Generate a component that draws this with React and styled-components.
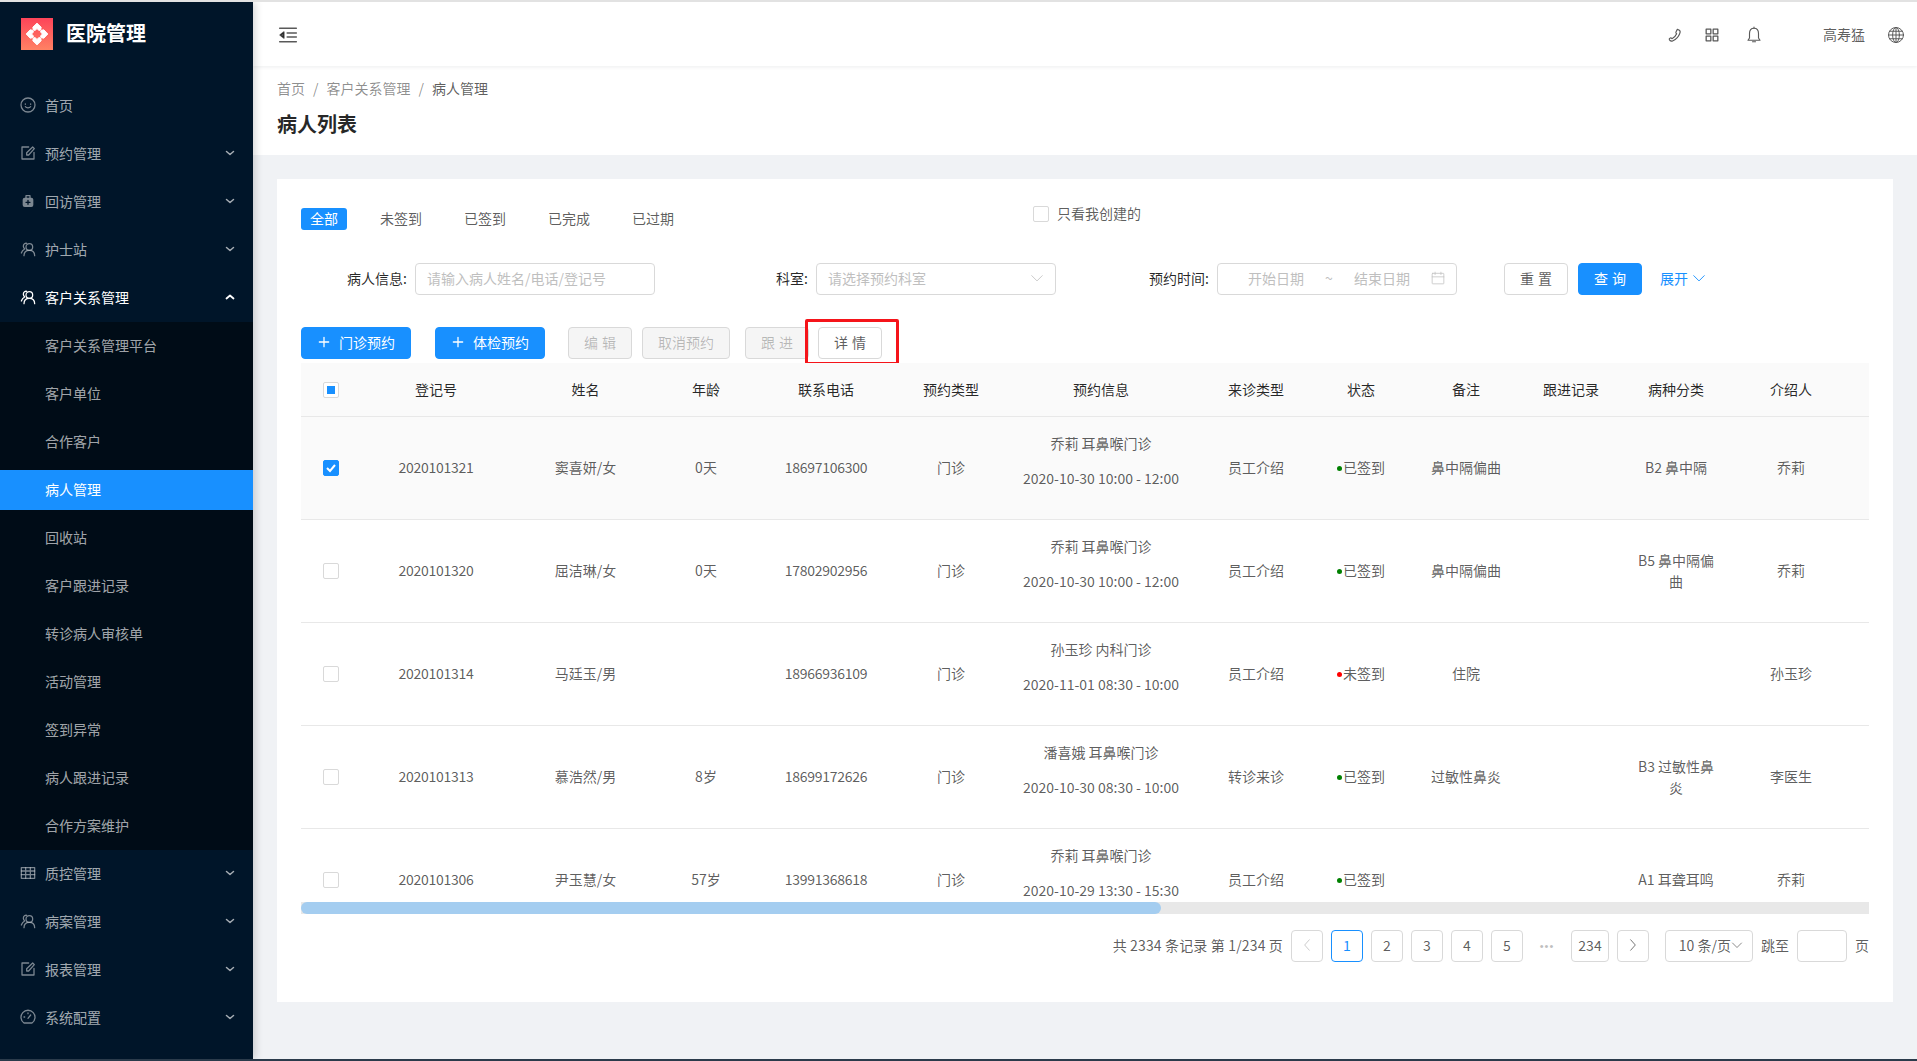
import React from 'react';
import styled, { createGlobalStyle } from 'styled-components';

const Global = createGlobalStyle`
  html, body { margin: 0; padding: 0; height: 100%; background: #f0f2f5; }
  #root { height: 100%; }
  * { box-sizing: border-box; }
  body { font-family: "Noto Sans CJK SC", "Liberation Sans", sans-serif; font-size: 14px; color: rgba(0,0,0,.65); overflow: hidden; }
  p { margin: 0; }
`;

const Page = styled.div`
  width: 1917px; height: 1061px; display: flex; flex-direction: column; overflow: hidden;
  background: #f0f2f5; border-top: 2px solid #e2e2e2; border-bottom: 2px solid #2b3b4b;
`;
const Shell = styled.div`flex: 1; min-height: 0; display: flex;`;
const Sidebar = styled.aside`
  width: 253px; flex: none; background: #001529; color: rgba(255,255,255,.65);
  box-shadow: 2px 0 8px rgba(29,35,41,.2); position: relative; z-index: 2; display: flex; flex-direction: column;
`;
const Brand = styled.div`height: 58px; padding: 16px 0 0 21px; display: flex; align-items: flex-start; gap: 13px; margin-bottom: 22px;`;
const BrandName = styled.div`color: #fff; font-size: 20px; font-weight: 700; line-height: 30px;`;
const MenuItem = styled.div`
  height: 48px; flex: none; display: flex; align-items: center; padding: 0 17px 2px 21px;
  color: ${p => p.$open ? '#fff' : 'rgba(255,255,255,.65)'};
  svg.main { width: 16px; height: 16px; margin-right: 9px; flex: none; opacity: ${p => p.$open ? 1 : .75}; margin-left: -1px; }
  span { flex: 1; }
`;
const SubMenu = styled.div`background: #000c17; display: flex; flex-direction: column;`;
const SubItem = styled.div`
  height: 40px; margin-bottom: 8px; display: flex; align-items: center; padding: 0 0 2px 45px;
  background: ${p => p.$active ? '#1890ff' : 'transparent'};
  color: ${p => p.$active ? '#fff' : 'rgba(255,255,255,.65)'};
  &:last-child { margin-bottom: 4px; }
  &:first-child { margin-top: 4px; }
`;

const Main = styled.main`flex: 1; min-width: 0; display: flex; flex-direction: column;`;
const Header = styled.header`
  height: 64px; flex: none; background: #fff; display: flex; align-items: center; padding: 2px 12px 0 25px;
  box-shadow: 0 1px 4px rgba(0,21,41,.08); position: relative; z-index: 1;
`;
const HeaderIcons = styled.div`margin-left: auto; display: flex; align-items: center; color: #595959;`;
const HeaderIcon = styled.span`display: flex; margin-left: ${p => p.$ml}px;`;
const UserName = styled.span`margin-left: 60px; font-size: 14px; line-height: 20px; padding-bottom: 3px; color: rgba(0,0,0,.65);`;
const PageHead = styled.div`background: #fff; height: 89px; padding: 11px 24px 0 24px; flex: none;`;
const Crumbs = styled.div`display: flex; gap: 8px; line-height: 22px; color: rgba(0,0,0,.45); span:last-child { color: rgba(0,0,0,.65); }`;
const Title = styled.h1`margin: 11px 0 0; font-size: 20px; font-weight: 700; line-height: 28px; color: rgba(0,0,0,.85);`;

const Card = styled.section`
  margin: 24px 24px 0 24px; height: 823px; background: #fff; padding: 29px 24px 0 24px; display: flex; flex-direction: column;
`;
const TabRow = styled.div`display: flex; align-items: flex-start; height: 22px;`;
const Tab = styled.div`
  height: 22px; line-height: 20px; border-radius: 3px; text-align: center; width: ${p => p.$w}px; margin-right: ${p => p.$mr}px;
  background: ${p => p.$active ? '#1890ff' : 'transparent'}; color: ${p => p.$active ? '#fff' : 'rgba(0,0,0,.65)'};
`;
const OwnCheck = styled.label`position: relative; display: flex; align-items: center; gap: 8px; margin-left: 359px; margin-top: -2px; height: 16px; span:last-child { margin-top: -2px; }`;
const Box = styled.span`
  width: 16px; height: 16px; flex: none; border-radius: 2px; border: 1px solid ${p => p.$on ? '#1890ff' : '#d9d9d9'};
  background: ${p => p.$on ? '#1890ff' : '#fff'}; display: inline-flex; align-items: center; justify-content: center;
`;
const HalfMark = styled.i`width: 8px; height: 8px; background: #1890ff; display: block;`;
const FilterRow = styled.div`display: flex; align-items: center; height: 32px; margin-top: 33px;`;
const FieldLabel = styled.label`color: rgba(0,0,0,.85); width: ${p => p.$w}px; text-align: right; padding: 0 8px 2px 0; white-space: nowrap; flex: none;`;
const Control = styled.div`
  width: 240px; height: 32px; flex: none; border: 1px solid #d9d9d9; border-radius: 4px; background: #fff; display: flex; align-items: center;
  padding: 0 11px 2px; color: #bfbfbf; justify-content: space-between; white-space: nowrap;
`;
const RangeStart = styled.span`width: 56px; margin-left: 19px; text-align: center; flex: none;`;
const RangeText = styled.span`width: 56px; text-align: center; flex: none;`;
const Btn = styled.button`
  height: 32px; border-radius: 4px; font: inherit; display: inline-flex; align-items: center; justify-content: center; flex: none; padding: 0 0 2px; position: relative;
  width: ${p => p.$w}px; margin-left: ${p => p.$ml || 0}px;
  border: 1px solid ${p => p.$primary ? '#1890ff' : '#d9d9d9'};
  background: ${p => p.$primary ? '#1890ff' : p.$disabled ? '#f5f5f5' : '#fff'};
  color: ${p => p.$primary ? '#fff' : p.$disabled ? 'rgba(0,0,0,.25)' : 'rgba(0,0,0,.65)'};
  gap: 8px;
`;
const Spaced = styled.span`letter-spacing: 4px; margin-right: -4px;`;
const Highlight = styled.span`
  position: absolute; left: -14px; right: -18px; top: -9px; bottom: -7px; border: 3px solid #f5141a; border-radius: 2px; pointer-events: none;
`;
const Expand = styled.span`margin-left: 18px; padding-bottom: 2px; color: #1890ff; display: flex; align-items: center; gap: 4px;`;
const Actions = styled.div`display: flex; margin-top: 32px; height: 32px;`;

const TableWrap = styled.div`margin-top: 4px; height: 551px; overflow: hidden; position: relative;`;
const columns = '60px 150px 149px 92px 148px 102px 198px 112px 98px 112px 98px 112px 118px 19px';
const HeadRow = styled.div`
  display: grid; grid-template-columns: ${columns}; height: 54px; align-items: center; text-align: center;
  background: #fafafa; border-bottom: 1px solid #e8e8e8; color: rgba(0,0,0,.85);
`;
const HeadCell = styled.div`padding-bottom: 2px;`;
const HeadCheck = styled.div`display: flex; justify-content: center;`;
const Row = styled.div`
  display: grid; grid-template-columns: ${columns}; height: 103px; align-items: center; text-align: center; line-height: 21px;
  background: ${p => p.$sel ? '#fafafa' : '#fff'}; border-bottom: 1px solid #e8e8e8; flex: none;
`;
const Cell = styled.div`padding: 0 16px 1px; display: flex; justify-content: center; align-items: center; text-align: center; min-width: 0;`;
const Num = styled.span`letter-spacing: -.25px;`;
const Info = styled.div`white-space: nowrap; p { margin-bottom: 14px; }`;
const Dot = styled.i`width: 5px; height: 5px; border-radius: 50%; background: ${p => p.$c}; margin-right: -1px; margin-top: 2px; flex: none;`;
const Status = styled.span`display: inline-flex; align-items: center; gap: 2px; white-space: nowrap;`;
const Bar = styled.div`height: 12px; background: #e8e8e8; position: absolute; left: 0; right: 0; bottom: 0;`;
const Thumb = styled.div`width: 860px; height: 12px; background: #a4cdf0; border-radius: 6px;`;
const Pager = styled.div`display: flex; justify-content: flex-end; align-items: center; gap: 8px; margin-top: 16px; height: 32px; > span { padding-bottom: 2px; }`;
const PageTotal = styled.span`letter-spacing: .15px;`;
const PageBtn = styled.div`
  width: ${p => p.$w || 32}px; height: 32px; padding-bottom: 2px; border: 1px solid ${p => p.$on ? '#1890ff' : '#d9d9d9'}; border-radius: 4px; display: flex; align-items: center; justify-content: center;
  color: ${p => p.$on ? '#1890ff' : p.$off ? 'rgba(0,0,0,.25)' : 'rgba(0,0,0,.65)'}; background: #fff;
`;
const Ellipsis = styled.div`width: 32px; text-align: center; letter-spacing: 1px; font-family: "Liberation Sans", sans-serif; font-size: 11px; color: #bfbfbf;`;
const SizeSelect = styled.div`width: 88px; height: 32px; border: 1px solid #d9d9d9; border-radius: 4px; margin-left: 8px; display: flex; align-items: center; justify-content: flex-end; padding: 0 9px 2px 0; white-space: nowrap;`;
const SizeLabel = styled.span`margin-right: 0;`;
const JumpInput = styled.div`width: 50px; height: 32px; border: 1px solid #d9d9d9; border-radius: 4px;`;

const I = ({ children, s = 16, vb = '0 0 24 24', sw = 1.9, className }) => (
  <svg className={className} width={s} height={s} viewBox={vb} fill="none" stroke="currentColor" strokeWidth={sw} strokeLinecap="round" strokeLinejoin="round">{children}</svg>
);
const icons = {
  smile: <><circle cx="12" cy="12" r="10.5" /><path d="M8 10.5v.5M16 10.5v.5M8 14.5c2 2.5 6 2.5 8 0" /></>,
  edit: <><path d="M13 3H3v18h18V11" /><path d="M10 15v-3.5L19 3l2.5 2.5L13 15z" /></>,
  bag: <><path d="M9 7V4h6v3" /><rect x="4" y="7" width="16" height="14" rx="3" fill="currentColor" stroke="none" /><path d="M12 11v6M9 14h6" stroke="#001529" strokeWidth="2" /></>,
  team: <><circle cx="14" cy="9" r="5" /><path d="M6 22c0-5 3-8 8-8s8 3 8 8" /><path d="M10 3.5C8 3 5 4.5 5 8c0 2 1 3 2 4-2 1-4 3-5 6" /></>,
  table: <><rect x="2" y="4" width="20" height="16" /><path d="M2 9h20M2 14.5h20M8.500 4v16M15.500 4v16" /></>,
  gauge: <><path d="M6 21a10.5 10.5 0 1 1 12 0z" /><path d="M12 14l4-5M6 12h1M12 6v1" /></>,
};
const Chevron = ({ up }) => (
  <I s={12} sw={up ? 3.6 : 3}><path d={up ? 'M5 15l7-6 7 6' : 'M5 9l7 6 7-6'} /></I>
);

const topMenu = [
  ['smile', '首页', false],
  ['edit', '预约管理', true],
  ['bag', '回访管理', true],
  ['team', '护士站', true],
];
const subs = ['客户关系管理平台', '客户单位', '合作客户', '病人管理', '回收站', '客户跟进记录', '转诊病人审核单', '活动管理', '签到异常', '病人跟进记录', '合作方案维护'];
const bottomMenu = [['table', '质控管理'], ['team', '病案管理'], ['edit', '报表管理'], ['gauge', '系统配置']];

const rows = [
  { sel: true, id: '2020101321', name: '窦喜妍/女', age: '0天', tel: '18697106300', a: '乔莉 耳鼻喉门诊', t: '2020-10-30 10:00 - 12:00', src: '员工介绍', st: 1, note: '鼻中隔偏曲', dis: 'B2 鼻中隔', by: '乔莉' },
  { id: '2020101320', name: '屈洁琳/女', age: '0天', tel: '17802902956', a: '乔莉 耳鼻喉门诊', t: '2020-10-30 10:00 - 12:00', src: '员工介绍', st: 1, note: '鼻中隔偏曲', dis: 'B5 鼻中隔偏曲', by: '乔莉' },
  { id: '2020101314', name: '马廷玉/男', age: '', tel: '18966936109', a: '孙玉珍 内科门诊', t: '2020-11-01 08:30 - 10:00', src: '员工介绍', st: 0, note: '住院', dis: '', by: '孙玉珍' },
  { id: '2020101313', name: '慕浩然/男', age: '8岁', tel: '18699172626', a: '潘喜娥 耳鼻喉门诊', t: '2020-10-30 08:30 - 10:00', src: '转诊来诊', st: 1, note: '过敏性鼻炎', dis: 'B3 过敏性鼻炎', by: '李医生' },
  { id: '2020101306', name: '尹玉慧/女', age: '57岁', tel: '13991368618', a: '乔莉 耳鼻喉门诊', t: '2020-10-29 13:30 - 15:30', src: '员工介绍', st: 1, note: '', dis: 'A1 耳聋耳鸣', by: '乔莉' },
];
const heads = ['登记号', '姓名', '年龄', '联系电话', '预约类型', '预约信息', '来诊类型', '状态', '备注', '跟进记录', '病种分类', '介绍人'];

const Plus = () => <I s={14} sw={2.2}><path d="M12 4v16M4 12h16" /></I>;
const petal = 'M16 5.200 L20.200 9.200 L19.600 12 L18 12.400 L16 10.600 L14 12.400 L12.400 12 L11.800 9.200 Z';

export default function App() {
  return (
    <Page>
      <Global />
      <Shell>
        <Sidebar>
          <Brand>
            <svg width="32" height="32" viewBox="0 0 32 32">
              <defs>
                <linearGradient id="lg" x1="0" y1="0" x2="0" y2="1"><stop offset="0" stopColor="#fd4459" /><stop offset="1" stopColor="#ff8264" /></linearGradient>
              </defs>
              <rect width="32" height="32" fill="url(#lg)" />
              <g fill="#fff" stroke="#fff" strokeWidth="1" strokeLinejoin="round">
                {[0, 90, 180, 270].map(a => <path key={a} d={petal} transform={`rotate(${a} 16 16)`} />)}
              </g>
            </svg>
            <BrandName>医院管理</BrandName>
          </Brand>
          {topMenu.map(([ic, t, ch]) => (
            <MenuItem key={t}><I className="main">{icons[ic]}</I><span>{t}</span>{ch && <Chevron />}</MenuItem>
          ))}
          <MenuItem $open><I className="main">{icons.team}</I><span>客户关系管理</span><Chevron up /></MenuItem>
          <SubMenu>
            {subs.map(s => <SubItem key={s} $active={s === '病人管理'}>{s}</SubItem>)}
          </SubMenu>
          {bottomMenu.map(([ic, t]) => (
            <MenuItem key={t}><I className="main">{icons[ic]}</I><span>{t}</span><Chevron /></MenuItem>
          ))}
        </Sidebar>
        <Main>
          <Header>
            <I s={20} sw={1.8}><path d="M2 4h20M11 9.500h11M11 14.500h11M2 20h20" /><path d="M7 8.500L2.500 12 7 15.500z" fill="currentColor" /></I>
            <HeaderIcons>
              <HeaderIcon><I s={16} sw={1.7}><path d="M15.500 3.500l3 1.500c1.500 1 1.500 3 .5 5-2 5-5.500 8.500-10 10.500-2 1-4.500 .5-5.500-1.500-.5-1 .5-2 1.500-2.500 1-.5 2 0 2.500 1 3-1.500 5.500-4 7-7.500-1-.5-1.500-1.500-1-2.500z" /></I></HeaderIcon>
              <HeaderIcon $ml={22}><I s={14} sw={2.2}><rect x="2" y="2" width="8" height="8" /><rect x="14" y="2" width="8" height="8" /><rect x="2" y="14" width="8" height="8" /><rect x="14" y="14" width="8" height="8" /></I></HeaderIcon>
              <HeaderIcon $ml={26}><I s={18} sw={1.5}><path d="M12 3c-4 0-6 3-6 7v6l-2 3h16l-2-3v-6c0-4-2-7-6-7z" /><path d="M10 21h4M12 1.500V3" /></I></HeaderIcon>
              <UserName>高寿猛</UserName>
              <HeaderIcon $ml={22}><I s={18} sw={1.3}><circle cx="12" cy="12" r="10" /><ellipse cx="12" cy="12" rx="4.500" ry="10" /><path d="M12 2v20M2 12h20M3.500 7h17M3.500 17h17" /></I></HeaderIcon>
            </HeaderIcons>
          </Header>
          <PageHead>
            <Crumbs><span>首页</span><span>/</span><span>客户关系管理</span><span>/</span><span>病人管理</span></Crumbs>
            <Title>病人列表</Title>
          </PageHead>
          <Card>
            <TabRow>
              <Tab $active $w={46} $mr={33}>全部</Tab>
              <Tab $w={42} $mr={42}>未签到</Tab>
              <Tab $w={42} $mr={42}>已签到</Tab>
              <Tab $w={42} $mr={42}>已完成</Tab>
              <Tab $w={42} $mr={0}>已过期</Tab>
              <OwnCheck><Box /><span>只看我创建的</span></OwnCheck>
            </TabRow>
            <FilterRow>
              <FieldLabel $w={114}>病人信息:</FieldLabel>
              <Control>请输入病人姓名/电话/登记号</Control>
              <FieldLabel $w={161}>科室:</FieldLabel>
              <Control>请选择预约科室<I s={14} sw={1.4}><path d="M3 8l9 9 9-9" /></I></Control>
              <FieldLabel $w={161}>预约时间:</FieldLabel>
              <Control>
                <RangeStart>开始日期</RangeStart>
                <span>~</span>
                <RangeText>结束日期</RangeText>
                <I s={14} sw={1.3}><rect x="2" y="4" width="20" height="18" rx="1" /><path d="M2 10h20M7 2v4M17 2v4" /></I>
              </Control>
              <Btn $w={64} $ml={47}><Spaced>重置</Spaced></Btn>
              <Btn $w={64} $ml={10} $primary><Spaced>查询</Spaced></Btn>
              <Expand>展开<I s={14} sw={1.6}><path d="M3 8l9 9 9-9" /></I></Expand>
            </FilterRow>
            <Actions>
              <Btn $w={110} $primary><Plus />门诊预约</Btn>
              <Btn $w={110} $ml={24} $primary><Plus />体检预约</Btn>
              <Btn $w={64} $ml={23} $disabled><Spaced>编辑</Spaced></Btn>
              <Btn $w={88} $ml={10} $disabled>取消预约</Btn>
              <Btn $w={64} $ml={15} $disabled><Spaced>跟进</Spaced></Btn>
              <Btn $w={64} $ml={9}><Spaced>详情</Spaced><Highlight /></Btn>
            </Actions>
            <TableWrap>
              <HeadRow>
                <HeadCheck><Box><HalfMark /></Box></HeadCheck>
                {heads.map(h => <HeadCell key={h}>{h}</HeadCell>)}
              </HeadRow>
              {rows.map(r => (
                <Row key={r.id} $sel={r.sel}>
                  <Cell><Box $on={r.sel}>{r.sel && <svg width="12" height="12" viewBox="0 0 12 12"><path d="M2 6l3 3 5-6" fill="none" stroke="#fff" strokeWidth="2" /></svg>}</Box></Cell>
                  <Cell><Num>{r.id}</Num></Cell>
                  <Cell>{r.name}</Cell>
                  <Cell>{r.age}</Cell>
                  <Cell><Num>{r.tel}</Num></Cell>
                  <Cell>门诊</Cell>
                  <Cell><Info><p>{r.a}</p><p>{r.t}</p></Info></Cell>
                  <Cell>{r.src}</Cell>
                  <Cell><Status><Dot $c={r.st ? '#008000' : '#ff0000'} />{r.st ? '已签到' : '未签到'}</Status></Cell>
                  <Cell>{r.note}</Cell>
                  <Cell />
                  <Cell>{r.dis}</Cell>
                  <Cell>{r.by}</Cell>
                </Row>
              ))}
              <Bar><Thumb /></Bar>
            </TableWrap>
            <Pager>
              <PageTotal>共 2334 条记录 第 1/234 页</PageTotal>
              <PageBtn $off><I s={14} sw={1.4}><path d="M16 3l-8 9 8 9" /></I></PageBtn>
              <PageBtn $on>1</PageBtn>
              <PageBtn>2</PageBtn>
              <PageBtn>3</PageBtn>
              <PageBtn>4</PageBtn>
              <PageBtn>5</PageBtn>
              <Ellipsis>•••</Ellipsis>
              <PageBtn $w={38}>234</PageBtn>
              <PageBtn><I s={14} sw={1.4}><path d="M8 3l8 9-8 9" /></I></PageBtn>
              <SizeSelect><SizeLabel>10 条/页</SizeLabel><I s={12} sw={1.4}><path d="M3 8l9 9 9-9" /></I></SizeSelect>
              <span>跳至</span>
              <JumpInput />
              <span>页</span>
            </Pager>
          </Card>
        </Main>
      </Shell>
    </Page>
  );
}
